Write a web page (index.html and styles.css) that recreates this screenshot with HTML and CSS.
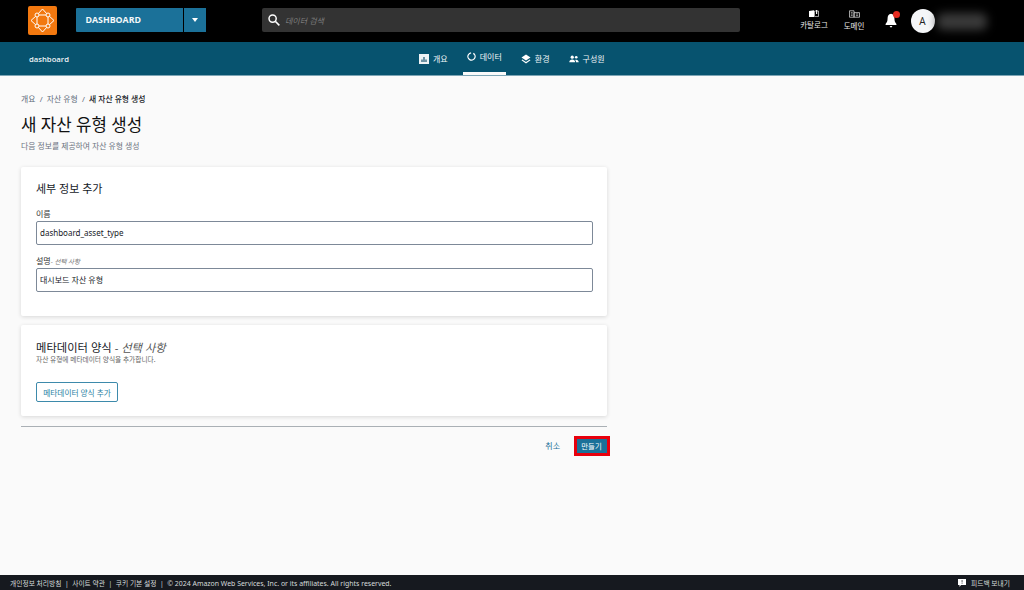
FILE: index.html
```html
<!DOCTYPE html>
<html lang="ko">
<head>
<meta charset="utf-8">
<title>새 자산 유형 생성</title>
<link rel="stylesheet" href="styles.css">
</head>
<body>
<header class="topbar">
  <div class="logo">
    <svg width="29" height="29" viewBox="0 0 29 29" fill="none" stroke="#fff" stroke-width="1">
      <rect x="9" y="9" width="11" height="11"/>
      <path d="M14.500 3 L20 9 L26 14.500 L20 20 L14.500 26 L9 20 L3 14.500 L9 9 Z"/>
      <circle cx="9" cy="9" r="2" fill="#f2780f"/><circle cx="20" cy="9" r="2" fill="#f2780f"/>
      <circle cx="9" cy="20" r="2" fill="#f2780f"/><circle cx="20" cy="20" r="2" fill="#f2780f"/>
    </svg>
  </div>
  <div class="project">
    <span class="project-name">DASHBOARD</span>
    <span class="project-caret"><i class="caret"></i></span>
  </div>
  <div class="search">
    <svg width="12" height="12" viewBox="0 0 13 13" fill="none" stroke="#fff" stroke-width="1.600"><circle cx="5" cy="5" r="3.900"/><path d="M8 8l4.300 4.300"/></svg>
    <span class="search-text">데이터 검색</span>
  </div>
  <div class="top-links">
    <div class="top-link">
      <svg width="10" height="7" viewBox="0 0 10 7"><path d="M0 1 L5 .3 V7 L0 7Z" fill="#fff"/><path d="M5.500 1 L9.500 1 V6.600 H5.500Z" fill="none" stroke="#ccc" stroke-width=".8"/><path d="M7 0h1.200v4H7z" fill="#eee"/></svg>
      <span>카탈로그</span>
    </div>
    <div class="top-link">
      <svg width="11" height="8" viewBox="0 0 12 8" fill="none" stroke="#ccc" stroke-width=".9"><path d="M.5.5h5v7h-5z"/><path d="M5.500 2.500h6v5h-6z"/><path d="M2 2.500h2M2 4h2M2 5.500h2M7.500 4h2.500M7.500 5.800h2.500" stroke-width=".8"/></svg>
      <span>도메인</span>
    </div>
  </div>
  <div class="bell">
    <svg width="12" height="15" viewBox="0 0 14 15" preserveAspectRatio="none"><path d="M7 .8c-2.800 0-4 2.200-4 4.700 0 2.600-.8 4-2.300 5.500v1h12.600v-1C11.800 9.500 11 8.100 11 5.500 11 3 9.800.8 7 .8z" fill="#fff"/><path d="M5.300 13h3.400L7 14.800z" fill="#fff"/></svg>
    <i class="dot"></i>
  </div>
  <div class="avatar">A</div>
  <div class="user-blur"></div>
</header>

<nav class="subnav">
  <span class="subnav-title">dashboard</span>
  <ul class="tabs">
    <li class="tab">
      <svg width="10" height="10" viewBox="0 0 10 10"><path d="M0 0h10v10H0z" fill="#eef3f5"/><path d="M2 8V5.500h2V3h2v2.500h2V8z" fill="#6d93a4"/></svg>
      <span>개요</span>
    </li>
    <li class="tab tab-active">
      <svg width="9" height="9" viewBox="0 0 10 10" fill="none" stroke="#fff" stroke-width="1.400"><circle cx="5" cy="5" r="4" stroke-dasharray="22 3" transform="rotate(-60 5 5)"/></svg>
      <span>데이터</span>
    </li>
    <li class="tab">
      <svg width="10" height="10" viewBox="0 0 10 10" fill="#fff"><path d="M5 .5 9.500 3.500 5 6.500.5 3.500z"/><path d="M1.300 5.500 5 8 8.700 5.500l.8.700L5 9.500.5 6.200z"/></svg>
      <span>환경</span>
    </li>
    <li class="tab">
      <svg width="10" height="8" viewBox="0 0 11 9" fill="#fff"><circle cx="3.500" cy="2.500" r="1.800"/><circle cx="8" cy="2.500" r="1.500"/><path d="M.2 8.200c0-2 1.500-3 3.300-3s3.300 1 3.300 3zM7.800 8.200c0-1.200-.3-2-1-2.700 2-.7 4 .5 4 2.700z"/></svg>
      <span>구성원</span>
    </li>
  </ul>
</nav>

<main class="content">
  <div class="column">
    <div class="breadcrumb">
      <span>개요</span><span class="sep">/</span><span>자산 유형</span><span class="sep">/</span><span class="current">새 자산 유형 생성</span>
    </div>
    <h1 class="title">새 자산 유형 생성</h1>
    <p class="desc">다음 정보를 제공하여 자산 유형 생성</p>

    <section class="card card-details">
      <h2 class="card-title">세부 정보 추가</h2>
      <label class="label label-first">이름</label>
      <div class="input">dashboard_asset_type</div>
      <label class="label label-second">설명<em class="optional">- 선택 사항</em></label>
      <div class="input">대시보드 자산 유형</div>
    </section>

    <section class="card card-meta">
      <h2 class="card-title card-title-meta">메타데이터 양식 <span class="title-opt">- <em>선택 사항</em></span></h2>
      <p class="card-sub">자산 유형에 메타데이터 양식을 추가합니다.</p>
      <button class="outline-btn" type="button">메타데이터 양식 추가</button>
    </section>

    <div class="actions">
      <a class="cancel">취소</a>
      <button class="create" type="button">만들기</button>
    </div>
  </div>
</main>

<footer class="footer">
  <div class="footer-left">
    <span>개인정보 처리방침</span><span class="bar">|</span><span>사이트 약관</span><span class="bar">|</span><span>쿠키 기본 설정</span><span class="bar">|</span><span class="copyright">© 2024 Amazon Web Services, Inc. or its affiliates. All rights reserved.</span>
  </div>
  <div class="footer-right">
    <svg width="8" height="8" viewBox="0 0 8 8"><path d="M0 0h8v6H3L1.500 8V6H0z" fill="#fff"/><path d="M3.700 1h.7v2.500h-.7zM3.700 4h.7v.8h-.7z" fill="#16191f"/></svg>
    <span>피드백 보내기</span>
  </div>
</footer>
</body>
</html>
```
FILE: styles.css
```css
* { box-sizing: border-box; }
html, body { height: 100%; }
body {
  margin: 0;
  height: 590px;
  overflow: hidden;
  display: flex;
  flex-direction: column;
  background: #fafafa;
  color: #16191f;
  font-family: "Noto Sans", "Noto Sans CJK KR", sans-serif;
  font-size: 8px;
}

.topbar {
  height: 42px;
  flex: none;
  background: #000;
  display: flex;
  align-items: center;
  padding-left: 28px;
  color: #fff;
}
.logo {
  width: 29px;
  height: 29px;
  margin-top: -2px;
  background: #f2780f;
  border-radius: 2px;
  display: flex;
}
.project {
  margin-left: 19px;
  width: 130px;
  height: 24px;
  margin-top: -2px;
  display: flex;
}
.project-name {
  width: 107px;
  padding-left: 9.500px;
  background: #1b7199;
  border-radius: 1px 0 0 1px;
  font: 700 8.800px/24px "Open Sans", sans-serif;
  color: #f4f8fa;
}
.project-caret {
  width: 22px;
  margin-left: 1px;
  background: #1b7199;
  display: flex;
  align-items: center;
  justify-content: center;
}
.caret {
  width: 0;
  height: 0;
  border-left: 3.500px solid transparent;
  border-right: 3.500px solid transparent;
  border-top: 4px solid #fff;
}
.search {
  margin-left: 56px;
  width: 478px;
  height: 24px;
  margin-top: -2px;
  background: #333;
  border-radius: 2px;
  display: flex;
  align-items: center;
  padding-left: 6px;
  gap: 5px;
}
.search-text {
  font-size: 8px;
  font-style: italic;
  color: #7d7d7d;
}
.top-links {
  margin-left: 60px;
  display: flex;
  gap: 15px;
}
.top-link {
  width: 28px;
  display: flex;
  flex-direction: column;
  align-items: center;
  gap: 3px;
  font-size: 7.500px;
  line-height: 11px;
  color: #e8e8e8;
  white-space: nowrap;
}
.top-link + .top-link { width: 22px; }
.bell {
  margin-left: 19.500px;
  width: 12px;
  height: 15px;
  margin-top: -2px;
  position: relative;
  display: flex;
}
.dot {
  position: absolute;
  top: -2px;
  right: -3px;
  width: 7px;
  height: 7px;
  border-radius: 50%;
  background: #e52b20;
}
.avatar {
  margin-left: 14px;
  width: 24px;
  height: 24px;
  margin-top: -1px;
  border-radius: 50%;
  background: #f5f6f8;
  color: #222;
  font: 400 10px/24px "Open Sans", sans-serif;
  text-align: center;
}
.user-blur {
  width: 50px;
  height: 17px;
  margin: 1px 0 0 2px;
  background: #3a3a3a;
  border-radius: 6px;
  filter: blur(5px);
}

.subnav {
  height: 34px;
  flex: none;
  background: #07536f;
  border-bottom: 1px solid #7da5b5;
  display: flex;
  align-items: center;
  padding-left: 29px;
  color: #fff;
}
.subnav-title {
  width: 39px;
  white-space: nowrap;
  font: 600 7.700px "Open Sans", sans-serif;
  color: #eef4f6;
}
.tabs {
  list-style: none;
  margin: 0 0 0 347px;
  padding: 0;
  height: 33px;
  display: flex;
  gap: 11px;
}
.tab {
  height: 33px;
  padding: 0 4px;
  display: flex;
  align-items: center;
  gap: 4px;
  font-size: 8px;
  color: #f0f5f7;
  white-space: nowrap;
}
.tab-active {
  border-bottom: 3px solid #fafafa;
  padding-bottom: 2px;
}

.content {
  flex: 1;
  padding: 0 21px;
  min-height: 0;
}
.column { width: 586px; }
.breadcrumb {
  margin-top: 17px;
  height: 12px;
  line-height: 12px;
  font-size: 7.800px;
  color: #5f6b7a;
  display: flex;
}
.sep { margin: 0 4.300px; }
.current { color: #16191f; font-weight: 500; }
.title {
  margin: 8px 0 0;
  font-size: 16.800px;
  line-height: 24px;
  font-weight: 400;
  color: #111;
}
.desc {
  margin: 3px 0 0;
  font-size: 7.850px;
  line-height: 12px;
  color: #6b7280;
}
.card {
  background: #fff;
  border-radius: 2px;
  box-shadow: 0 1px 4px rgba(0,0,0,.14);
  padding: 0 14px 0 15px;
}
.card-details {
  margin-top: 15px;
  height: 149px;
  padding-top: 14px;
}
.card-title {
  margin: 0;
  font-size: 11px;
  line-height: 16px;
  font-weight: 400;
  color: #16191f;
}
.card-title-meta { font-size: 11.300px; margin-top: 1px; }
.label {
  display: block;
  font-size: 8px;
  line-height: 11px;
  color: #333;
}
.label-first { margin-top: 11px; }
.label-second { margin-top: 11px; line-height: 9px; }
.optional {
  font-size: 6.500px;
  color: #777;
}
.input {
  margin-top: 2px;
  height: 24px;
  border: 1px solid #7d8998;
  border-radius: 2px;
  padding-left: 3px;
  font-size: 8px;
  line-height: 22px;
  color: #16191f;
}
.card-meta {
  margin-top: 9px;
  height: 91px;
  padding-top: 14px;
}
.title-opt { color: #555; }
.card-sub {
  margin: -1px 0 0;
  font-size: 6.700px;
  line-height: 10px;
  color: #666;
}
.outline-btn {
  display: block;
  margin-top: 17px;
  width: 82px;
  height: 20px;
  padding: 0;
  background: #fff;
  border: 1px solid #3d8aab;
  border-radius: 2px;
  color: #2a7fa3;
  font: 400 7.700px "Noto Sans", "Noto Sans CJK KR", sans-serif;
}
.actions {
  margin-top: 9.500px;
  border-top: 1px solid #aab0b5;
  padding-top: 9px;
  display: flex;
  justify-content: flex-end;
  align-items: center;
  gap: 14px;
}
.cancel { font-size: 8px; color: #1b7199; }
.create {
  width: 36px;
  height: 20px;
  padding: 0 1px 0 0;
  margin-right: -3px;
  background: #1b7199;
  border: 3px solid #e8000d;
  color: #fff;
  font: 400 7.400px "Noto Sans", "Noto Sans CJK KR", sans-serif;
}

.footer {
  height: 15px;
  flex: none;
  background: #16191f;
  color: #d5dbdb;
  display: flex;
  justify-content: space-between;
  align-items: center;
  padding: 0 14px 0 10px;
  font-size: 6.750px;
}
.footer-left { display: flex; align-items: baseline; }
.copyright { font-size: 6.950px; }
.bar { margin: 0 3.500px; }
.footer-right { display: flex; align-items: center; gap: 5px; }
```
